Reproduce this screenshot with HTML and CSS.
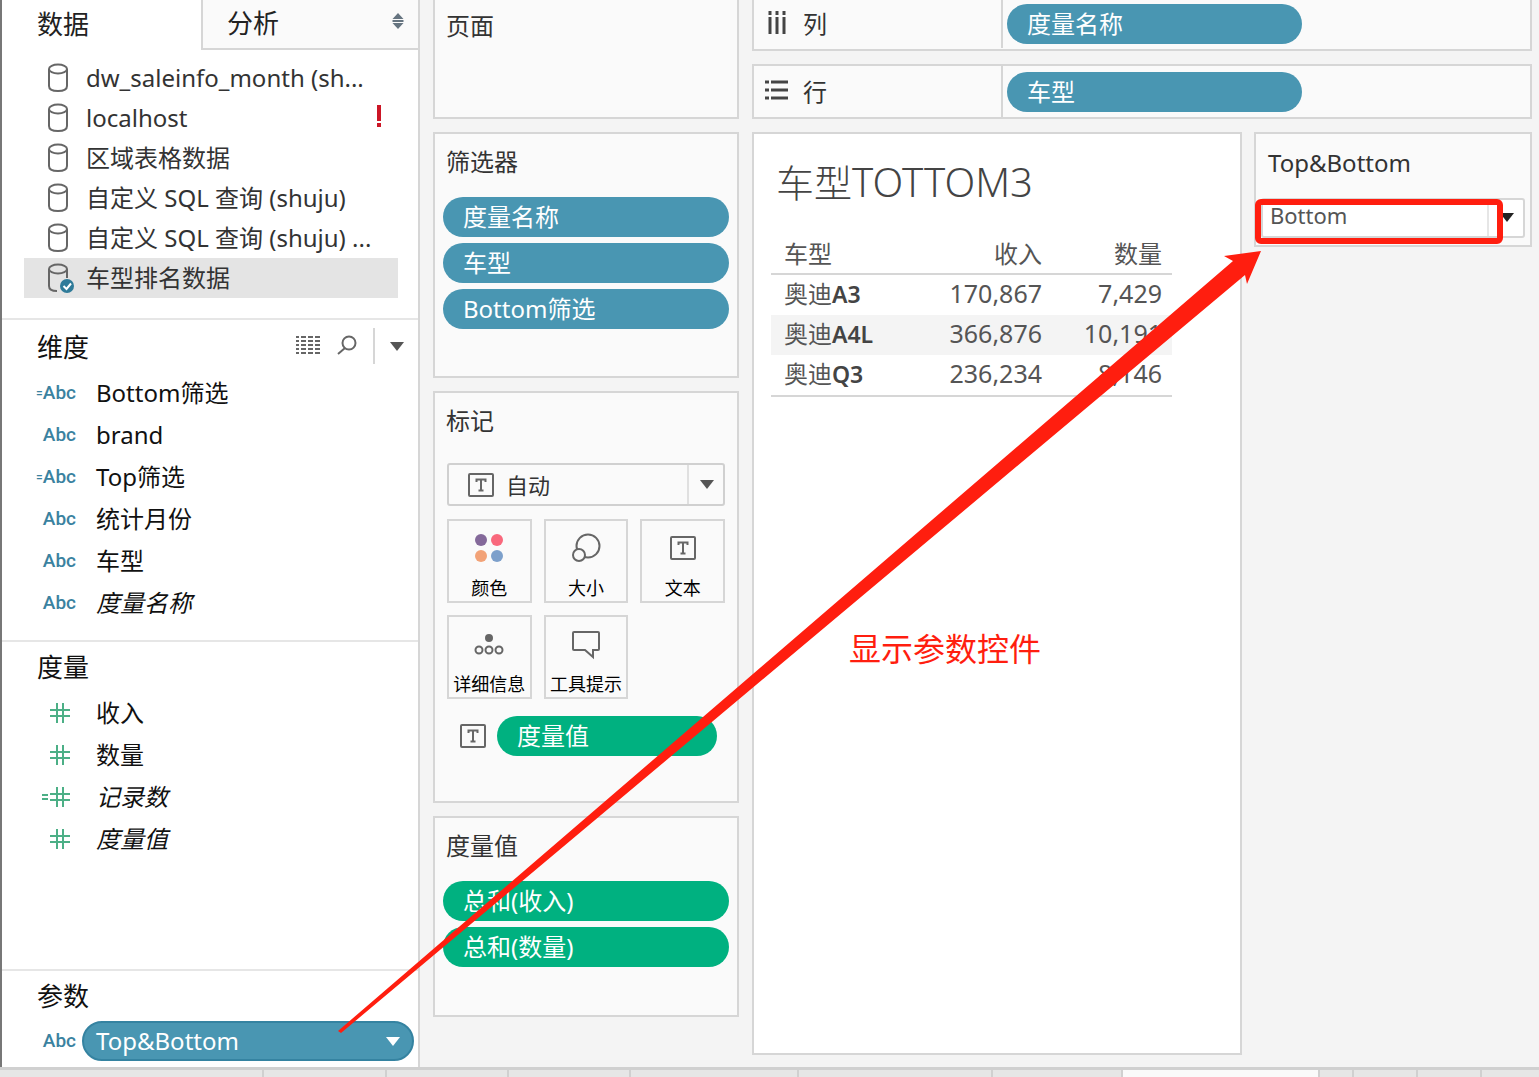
FILE: index.html
```html
<!DOCTYPE html>
<html lang="zh-CN">
<head>
    <meta charset="UTF-8">
    <meta name="viewport" content="width=device-width, initial-scale=1.0">
    <title>车型TOTTOM3</title>
    <link rel="stylesheet" href="styles.css">
</head>
<body>
    <!-- shared icons -->
    <svg class="sprite" aria-hidden="true">
        <symbol id="icon-db" viewBox="0 0 22 30">
            <path d="M2 6v17c0 3 3 5 9 5s9-2 9-5V6"/>
            <ellipse cx="11" cy="6" rx="9" ry="4.500"/>
        </symbol>
        <symbol id="icon-hash" viewBox="0 0 32 24">
            <path d="M13 2v20M19 2v20M6 9h20M6 15h20"/>
        </symbol>
        <symbol id="icon-text" viewBox="0 0 28 26">
            <rect x="2" y="2" width="24" height="22" rx="1"/>
            <path d="M9.500 10V7.500h9V10M14 7.500v11M11.500 18.500h5"/>
        </symbol>
        <symbol id="icon-arrow" viewBox="0 0 14 9">
            <path d="M0 0h14L7 9z"/>
        </symbol>
    </svg>

    <div class="workspace">
        <aside class="sidebar">
            <div class="tabs">
                <button type="button" class="tab active">数据</button>
                <button type="button" class="tab">分析
                    <svg class="sort" width="12" height="16" viewBox="0 0 12 16"><path d="M6 0l5.500 6H.5zM6 16l5.500-6H.5zM.5 7h11v2H.5z"/></svg>
                </button>
            </div>

            <ul class="sources">
                <li><svg class="db"><use href="#icon-db"/></svg>dw_saleinfo_month (sh...</li>
                <li><svg class="db"><use href="#icon-db"/></svg>localhost
                    <svg class="alert" width="6" height="24" viewBox="0 0 6 24"><path d="M1 1h4v16H1zM1 19h4v4H1z"/></svg>
                </li>
                <li><svg class="db"><use href="#icon-db"/></svg>区域表格数据</li>
                <li><svg class="db"><use href="#icon-db"/></svg>自定义 SQL 查询 (shuju)</li>
                <li><svg class="db"><use href="#icon-db"/></svg>自定义 SQL 查询 (shuju) ...</li>
                <li class="selected">
                    <svg class="db" viewBox="0 0 22 30">
                        <ellipse cx="11" cy="6" rx="9" ry="4.500"/>
                        <path d="M2 6v17c0 3 3 5 8 5M20 6v9"/>
                        <circle class="badge" cx="20" cy="23" r="7"/>
                        <path class="tick" d="M16.500 23l3 3 4.500-5.500"/>
                    </svg>车型排名数据
                </li>
            </ul>

            <section class="fields dimensions">
                <div class="fields-header">
                    <h2>维度</h2>
                    <div class="tools">
                        <svg class="grid-icon" width="26" height="22" viewBox="0 0 26 22"><path d="M1 2h3M6 2h5M13 2h5M20 2h5M1 6h3M6 6h5M13 6h5M20 6h5M1 10h3M6 10h5M13 10h5M20 10h5M1 14h3M6 14h5M13 14h5M20 14h5M1 18h3M6 18h5M13 18h5M20 18h5"/></svg>
                        <svg class="search-icon" width="22" height="22" viewBox="0 0 22 22"><circle cx="13" cy="8" r="6.500"/><path d="M9 13l-7 6"/></svg>
                        <span class="divider"></span>
                        <svg class="arrow"><use href="#icon-arrow"/></svg>
                    </div>
                </div>
                <ul>
                    <li><span class="abc"><small>=</small>Abc</span>Bottom筛选</li>
                    <li><span class="abc">Abc</span>brand</li>
                    <li><span class="abc"><small>=</small>Abc</span>Top筛选</li>
                    <li><span class="abc">Abc</span>统计月份</li>
                    <li><span class="abc">Abc</span>车型</li>
                    <li><span class="abc">Abc</span><em>度量名称</em></li>
                </ul>
            </section>

            <section class="fields measures">
                <div class="fields-header"><h2>度量</h2></div>
                <ul>
                    <li><svg class="hash"><use href="#icon-hash"/></svg>收入</li>
                    <li><svg class="hash"><use href="#icon-hash"/></svg>数量</li>
                    <li><svg class="hash" viewBox="0 0 32 24"><path d="M13 2v20M19 2v20M6 9h20M6 15h20M-2 10h6M-2 14h6"/></svg><em>记录数</em></li>
                    <li><svg class="hash"><use href="#icon-hash"/></svg><em>度量值</em></li>
                </ul>
            </section>

            <section class="fields parameters">
                <div class="fields-header"><h2>参数</h2></div>
                <div class="parameter">
                    <span class="abc">Abc</span>
                    <button type="button" class="pill">Top&amp;Bottom <svg class="arrow"><use href="#icon-arrow"/></svg></button>
                </div>
            </section>
        </aside>

        <div class="cards">
            <section class="card pages"><h3>页面</h3></section>

            <section class="card filters">
                <h3>筛选器</h3>
                <div class="pills">
                    <button type="button" class="pill">度量名称</button>
                    <button type="button" class="pill">车型</button>
                    <button type="button" class="pill">Bottom筛选</button>
                </div>
            </section>

            <section class="card marks">
                <h3>标记</h3>
                <div class="mark-type">
                    <svg class="text-icon"><use href="#icon-text"/></svg>
                    <select aria-label="标记"><option>自动</option></select>
                    <svg class="arrow"><use href="#icon-arrow"/></svg>
                </div>
                <div class="mark-buttons">
                    <button type="button">
                        <svg width="30" height="30" viewBox="0 0 30 30"><circle cx="7" cy="7" r="6" fill="#84699a"/><circle cx="23" cy="7" r="6" fill="#f9687c"/><circle cx="7" cy="23" r="6" fill="#f2a277"/><circle cx="23" cy="23" r="6" fill="#7da0cb"/></svg>
                        颜色
                    </button>
                    <button type="button">
                        <svg class="line-icon" width="30" height="30" viewBox="0 0 30 30"><circle cx="17" cy="13" r="11.500"/><circle cx="8" cy="22" r="6" fill="#fafafa"/></svg>
                        大小
                    </button>
                    <button type="button">
                        <svg class="line-icon" width="28" height="30" viewBox="0 -2 28 30"><use href="#icon-text" width="28" height="26"/></svg>
                        文本
                    </button>
                    <button type="button">
                        <svg class="line-icon" width="30" height="30" viewBox="0 0 30 30"><circle cx="15" cy="9" r="3" fill="#666"/><circle cx="5" cy="21" r="3.500"/><circle cx="15" cy="21" r="3.500"/><circle cx="25" cy="21" r="3.500"/></svg>
                        详细信息
                    </button>
                    <button type="button">
                        <svg class="line-icon" width="30" height="30" viewBox="0 0 30 30"><path d="M3 3h24q1 0 1 1v16q0 1-1 1h-5v7l-8-7H3q-1 0-1-1V4q0-1 1-1z"/></svg>
                        工具提示
                    </button>
                </div>
                <div class="mark-field">
                    <svg class="text-icon"><use href="#icon-text"/></svg>
                    <button type="button" class="pill green">度量值</button>
                </div>
            </section>

            <section class="card values">
                <h3>度量值</h3>
                <div class="pills">
                    <button type="button" class="pill green">总和(收入)</button>
                    <button type="button" class="pill green">总和(数量)</button>
                </div>
            </section>
        </div>

        <main class="main">
            <div class="shelf columns">
                <div class="shelf-label">
                    <svg width="26" height="26" viewBox="0 0 26 26"><path d="M5 0v4M12 0v4M19 0v4M5 6v17M12 6v17M19 6v17"/></svg>列
                </div>
                <button type="button" class="pill">度量名称</button>
            </div>
            <div class="shelf">
                <div class="shelf-label">
                    <svg width="26" height="26" viewBox="0 0 26 26"><path d="M0 3h4M0 11h4M0 19h4M6 3h17M6 11h17M6 19h17"/></svg>行
                </div>
                <button type="button" class="pill">车型</button>
            </div>

            <div class="view">
                <section class="sheet">
                    <h1>车型<span>TOTTOM3</span></h1>
                    <table>
                        <thead>
                            <tr><th>车型</th><th>收入</th><th>数量</th></tr>
                        </thead>
                        <tbody>
                            <tr><td>奥迪<b>A3</b></td><td>170,867</td><td>7,429</td></tr>
                            <tr><td>奥迪<b>A4L</b></td><td>366,876</td><td>10,191</td></tr>
                            <tr><td>奥迪<b>Q3</b></td><td>236,234</td><td>8,146</td></tr>
                        </tbody>
                    </table>
                </section>

                <section class="param-card">
                    <label for="param">Top&amp;Bottom</label>
                    <div class="param-select">
                        <select id="param"><option>Bottom</option><option>Top</option></select>
                        <svg class="arrow"><use href="#icon-arrow"/></svg>
                        <span class="frame"></span>
                    </div>
                </section>
            </div>
        </main>

        <!-- annotation from the parameter to its control -->
        <svg class="pointer" width="930" height="790" viewBox="335 248 930 790" aria-hidden="true">
            <path d="M338 1031L1233 261L1224 256L1261 251L1247 284L1245 275L341 1033z"/>
        </svg>
        <p class="note">显示参数控件</p>
    </div>

    <footer class="sheet-tabs">
        <span></span><span></span><span></span><span></span><span></span><span></span><span></span>
        <span class="current"></span><span></span><span></span><span></span><span></span>
    </footer>
</body>
</html>
```
FILE: styles.css
```css
:root {
    --blue: #4996b2;
    --green: #00b180;
    --red: #ff1e0f;
    --line: #d6d6d6;
    --card: #fafafa;
    --page: #f4f4f4;
    --text: #333;
    --icon: #666;
}

* {
    margin: 0;
    padding: 0;
    box-sizing: border-box;
}

body {
    min-height: 100vh;
    display: flex;
    flex-direction: column;
    font-family: "Noto Sans", "Noto Sans CJK SC", sans-serif;
    font-size: 24px;
    line-height: 40px;
    color: var(--text);
    background: var(--page);
}

button, select {
    font: inherit;
    color: inherit;
    border: none;
    background: none;
}

select {
    appearance: none;
}

ul {
    list-style: none;
}

svg {
    flex: none;
    overflow: visible;
}

.sprite {
    position: absolute;
    width: 0;
    height: 0;
}

.workspace {
    position: relative;
    flex: 1;
    display: flex;
}

.arrow {
    width: 14px;
    height: 9px;
    fill: #555;
}

.text-icon, .line-icon {
    fill: none;
    stroke: var(--icon);
    stroke-width: 2;
}

.text-icon {
    width: 28px;
    height: 26px;
}

/* pills */
.pill {
    display: flex;
    align-items: center;
    width: 100%;
    height: 40px;
    padding: 0 20px;
    border-radius: 20px;
    background: var(--blue);
    color: #fff;
    text-align: left;
    line-height: 38px;
}

.pill.green {
    background: var(--green);
}

.pills {
    display: flex;
    flex-direction: column;
    gap: 6px;
    padding: 7px 8px;
}

/* sidebar */
.sidebar {
    width: 420px;
    display: flex;
    flex-direction: column;
    background: #fff;
    border-left: 2px solid #777;
    border-right: 2px solid var(--line);
}

.tabs {
    display: flex;
    height: 50px;
}

.tab {
    flex: 1;
    display: flex;
    align-items: center;
    justify-content: space-between;
    padding: 0 14px 2px 24px;
    font-size: 26px;
    color: #222;
    background: var(--card);
    border-left: 2px solid var(--line);
    border-bottom: 2px solid var(--line);
}

.tab.active {
    flex: 0 0 199px;
    padding-left: 35px;
    background: none;
    border: none;
}

.sort {
    margin-bottom: 4px;
    fill: #667480;
}

.sources {
    padding: 8px 20px 20px 22px;
}

.sources li {
    display: flex;
    align-items: center;
    gap: 17px;
    padding-left: 23px;
    white-space: nowrap;
}

.sources .selected {
    background: #e4e4e4;
}

.db {
    width: 22px;
    height: 30px;
    fill: none;
    stroke: var(--icon);
    stroke-width: 2;
}

.db .badge {
    fill: #2f7b99;
    stroke: none;
}

.db .tick {
    stroke: #fff;
}

.alert {
    margin: 0 16px 4px auto;
    fill: #cc1626;
}

.fields {
    border-top: 2px solid #e6e6e6;
}

.dimensions {
    padding: 2px 0 16px;
}

.measures {
    flex: 1;
}

.fields-header {
    display: flex;
    align-items: center;
    justify-content: space-between;
    height: 50px;
    padding: 0 14px 0 35px;
}

.fields h2 {
    font-size: 26px;
    font-weight: 400;
    color: #111;
}

.tools {
    display: flex;
    align-items: center;
    gap: 15px;
    padding-bottom: 2px;
}

.tools .divider {
    width: 2px;
    height: 36px;
    background: var(--line);
}

.grid-icon, .search-icon {
    fill: none;
    stroke: var(--icon);
    stroke-width: 2;
}

.fields li {
    display: flex;
    align-items: center;
    gap: 20px;
    height: 42px;
    padding-left: 34px;
    color: #111;
}

.abc {
    flex: none;
    width: 40px;
    font-family: Roboto, sans-serif;
    font-size: 19px;
    font-weight: 500;
    text-align: right;
    white-space: nowrap;
    color: #3a82a0;
}

.abc small {
    font-size: 12px;
    vertical-align: 2px;
}

.hash {
    width: 32px;
    height: 24px;
    margin-left: 8px;
    fill: none;
    stroke: #4caf86;
    stroke-width: 2;
}

.parameter {
    display: flex;
    align-items: center;
    gap: 6px;
    padding: 0 4px 6px 34px;
}

.parameter .pill {
    flex: 1;
    justify-content: space-between;
    padding: 0 12px;
    border: 2px solid #3583a1;
}

.parameter .arrow {
    fill: #fff;
}

/* cards */
.cards {
    width: 306px;
    margin: 0 13px;
    display: flex;
    flex-direction: column;
    gap: 13px;
}

.card {
    background: var(--card);
    border: 2px solid var(--line);
}

.card h3 {
    padding-left: 11px;
    font-size: 24px;
    font-weight: 400;
    line-height: 56px;
}

.pages {
    height: 119px;
    border-top: none;
}

.pages h3 {
    line-height: 52px;
}

.filters {
    height: 246px;
}

.marks {
    height: 412px;
}

.values {
    height: 201px;
}

.mark-type {
    position: relative;
    margin: 14px 12px 13px;
}

.mark-type select {
    display: block;
    width: 100%;
    height: 43px;
    padding: 0 0 2px 57px;
    font-size: 22px;
    border: 2px solid #d0d0d0;
    border-radius: 3px;
    background: linear-gradient(#e0e0e0, #e0e0e0) right 34px top / 2px 100% no-repeat;
}

.mark-type .text-icon {
    position: absolute;
    left: 20px;
    top: 9px;
}

.mark-type .arrow {
    position: absolute;
    right: 11px;
    top: 17px;
}

.mark-buttons {
    display: grid;
    grid-template-columns: repeat(3, 1fr);
    gap: 12px;
    padding: 0 12px;
}

.mark-buttons button {
    display: flex;
    flex-direction: column;
    align-items: center;
    justify-content: space-between;
    height: 84px;
    padding-top: 12px;
    font-size: 18px;
    line-height: 26px;
    white-space: nowrap;
    color: #000;
    border: 2px solid var(--line);
}

.mark-field {
    display: flex;
    align-items: center;
    gap: 10px;
    padding: 17px 20px 0 24px;
}

/* shelves and view */
.main {
    flex: 1;
    display: flex;
    flex-direction: column;
    gap: 13px;
    padding: 0 7px 12px 0;
}

.shelf {
    display: flex;
    align-items: center;
    height: 55px;
    background: var(--card);
    border: 2px solid var(--line);
}

.shelf.columns {
    height: 51px;
    padding-bottom: 1px;
    border-top: none;
}

.shelf-label {
    display: flex;
    align-items: center;
    gap: 12px;
    align-self: stretch;
    width: 249px;
    padding-left: 11px;
    border-right: 2px solid var(--line);
}

.shelf-label svg {
    fill: none;
    stroke: #444;
    stroke-width: 3;
}

.shelf .pill {
    width: 295px;
    margin-left: 4px;
}

.view {
    flex: 1;
    display: flex;
    align-items: flex-start;
    gap: 12px;
}

.sheet {
    flex: 1;
    align-self: stretch;
    padding: 18px 17px;
    background: #fff;
    border: 2px solid var(--line);
}

.sheet h1 {
    padding-left: 5px;
    font-size: 38px;
    font-weight: 300;
    line-height: 60px;
    color: #444;
}

.sheet h1 span {
    font-size: 40px;
}

.sheet table {
    width: 401px;
    margin-top: 22px;
    border-collapse: collapse;
    table-layout: fixed;
    color: #555;
    border-bottom: 2px solid var(--line);
}

.sheet th, .sheet td {
    width: 120px;
    height: 40px;
    padding: 0 10px;
    font-weight: 400;
    line-height: 38px;
    text-align: right;
}

.sheet td {
    padding-bottom: 4px;
    font-size: 25px;
    line-height: 36px;
}

.sheet th:first-child, .sheet td:first-child {
    width: 161px;
    padding-left: 13px;
    font-size: 24px;
    text-align: left;
}

.sheet td:first-child {
    padding-bottom: 2px;
}

.sheet thead tr {
    border-bottom: 2px solid var(--line);
}

.sheet tbody tr:nth-child(even) {
    background: #f4f4f4;
}

.sheet b {
    font-size: 23px;
    font-weight: 600;
    color: #444;
}

.param-card {
    width: 278px;
    height: 115px;
    background: var(--card);
    border: 2px solid var(--line);
}

.param-card label {
    display: block;
    padding-left: 12px;
    line-height: 58px;
}

.param-select {
    position: relative;
    margin: 6px 5px 0;
}

.param-select select {
    display: block;
    width: 100%;
    height: 40px;
    padding: 0 7px 6px;
    font-size: 22px;
    line-height: 30px;
    color: #555;
    border: 2px solid var(--line);
    border-radius: 3px;
    background: linear-gradient(#e6e6e6, #e6e6e6) right 34px top / 2px 100% no-repeat #fff;
}

.param-select .arrow {
    position: absolute;
    right: 11px;
    top: 15px;
    fill: #222;
}

.frame {
    position: absolute;
    left: -6px;
    top: 1px;
    right: 22px;
    height: 45px;
    border: 6px solid var(--red);
    border-radius: 6px;
}

.pointer {
    position: absolute;
    left: 335px;
    top: 248px;
    fill: var(--red);
    pointer-events: none;
}

.note {
    position: absolute;
    left: 849px;
    top: 629px;
    font-size: 32px;
    color: var(--red);
}

/* worksheet tabs */
.sheet-tabs {
    display: grid;
    grid-template-columns: 264px 123px 122px 122px 168px 194px 130px 197px 34px 64px 64px 1fr;
    height: 10px;
    background: #e6e6e6;
    border-top: 3px solid #d0d0d0;
}

.sheet-tabs span {
    border-right: 2px solid #d0d0d0;
}

.sheet-tabs span:last-child {
    border-right: none;
}

.sheet-tabs .current {
    background: var(--card);
}
```
